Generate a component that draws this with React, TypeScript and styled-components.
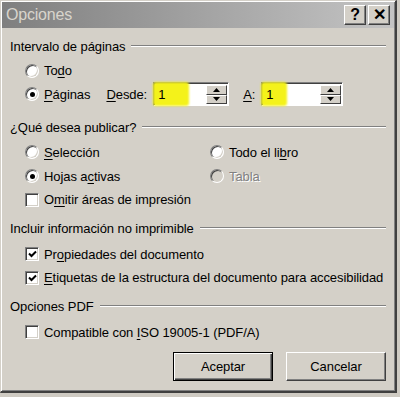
import React from 'react';
import styled, { createGlobalStyle } from 'styled-components';

const GlobalStyle = createGlobalStyle`
  html, body {
    margin: 0;
    padding: 0;
    background: #cfcbc3;
  }
  body {
    font-family: "Liberation Sans", Arial, sans-serif;
    font-size: 13px;
    letter-spacing: -0.08px;
    color: #000;
  }
`;

const Window = styled.div`
  width: 397px;
  height: 393px;
  box-sizing: border-box;
  background: #d4d0c8;
  border-top: 1px solid #d4d0c8;
  border-left: 1px solid #d4d0c8;
  border-right: 2px solid #404040;
  border-bottom: 2px solid #404040;
  box-shadow: inset 1px 1px 0 #ffffff, inset -1px -1px 0 #808080;
  display: flex;
  flex-direction: column;
`;

const TitleBar = styled.div`
  height: 26px;
  margin: 1px 1px 0 1px;
  background: linear-gradient(to right, #7f7f7f 0%, #a9a9a9 60%, #c4c4c4 100%);
  display: flex;
  align-items: center;
  padding: 0 4px 0 4px;
`;

const Title = styled.span`
  flex: 1;
  color: #d8d4cc;
  font-size: 16px;
  letter-spacing: -0.2px;
`;

const TitleButton = styled.div`
  width: 20px;
  height: 18px;
  margin-left: 2px;
  background: #d4d0c8;
  border-top: 1px solid #ffffff;
  border-left: 1px solid #ffffff;
  border-right: 1px solid #404040;
  border-bottom: 1px solid #404040;
  box-shadow: inset -1px -1px 0 #808080;
  display: flex;
  align-items: center;
  justify-content: center;
  font-weight: bold;
  font-size: 16px;
  line-height: 1;
`;

const Body = styled.div`
  flex: 1;
  display: flex;
  flex-direction: column;
  padding: 9px 9px 0 9px;
`;

const Legend = styled.div<{ $top?: number }>`
  display: flex;
  align-items: center;
  height: 18px;
  margin-top: ${({ $top }) => $top ?? 0}px;
  gap: 6px;
  &::after {
    content: '';
    flex: 1;
    height: 0;
    border-top: 1px solid #808080;
    border-bottom: 1px solid #ffffff;
  }
`;

const Rows = styled.div<{ $top?: number }>`
  display: flex;
  flex-direction: column;
  margin-top: ${({ $top }) => $top ?? 0}px;
  padding-left: 15px;
`;

const Row = styled.div<{ $h?: number }>`
  display: flex;
  align-items: center;
  height: ${({ $h }) => $h ?? 24}px;
`;

const Cell = styled.div<{ $w?: number }>`
  display: flex;
  align-items: center;
  width: ${({ $w }) => ($w ? `${$w}px` : 'auto')};
`;

const RadioDot = styled.span<{ $checked?: boolean; $disabled?: boolean }>`
  position: relative;
  width: 12px;
  height: 12px;
  border-radius: 50%;
  background: ${({ $disabled }) => ($disabled ? '#d4d0c8' : '#ffffff')};
  border: 1px solid;
  border-color: #808080 #ffffff #ffffff #808080;
  box-shadow: inset 1px 1px 0 #404040, inset -1px -1px 0 #d4d0c8;
  margin-right: 5px;
  flex-shrink: 0;
  &::after {
    content: '';
    display: ${({ $checked }) => ($checked ? 'block' : 'none')};
    position: absolute;
    left: 3.5px;
    top: 3.5px;
    width: 5px;
    height: 5px;
    border-radius: 50%;
    background: #000;
  }
`;

const Box = styled.span`
  width: 12px;
  height: 12px;
  background: #ffffff;
  border: 1px solid;
  border-color: #808080 #ffffff #ffffff #808080;
  box-shadow: inset 1px 1px 0 #404040, inset -1px -1px 0 #d4d0c8;
  margin-right: 5px;
  flex-shrink: 0;
  display: flex;
  align-items: center;
  justify-content: center;
`;

const Label = styled.span<{ $disabled?: boolean }>`
  color: ${({ $disabled }) => ($disabled ? '#808080' : '#000')};
  text-shadow: ${({ $disabled }) => ($disabled ? '1px 1px 0 #ffffff' : 'none')};
  white-space: nowrap;
`;

const Key = styled.span`
  text-decoration: underline;
  text-underline-offset: 2px;
`;

const FieldLabel = styled.span<{ $left: number }>`
  margin-left: ${({ $left }) => $left}px;
  margin-right: 6px;
`;

const Spin = styled.div<{ $w: number }>`
  width: ${({ $w }) => $w}px;
  height: 24px;
  box-sizing: border-box;
  background: #ffffff;
  border: 1px solid;
  border-color: #808080 #ffffff #ffffff #808080;
  box-shadow: inset 1px 1px 0 #404040;
  display: flex;
  align-items: stretch;
  padding: 2px 1px 1px 2px;
`;

const SpinText = styled.div`
  flex: 1;
  position: relative;
  display: flex;
  align-items: center;
  padding-left: 2px;
`;

const Marker = styled.span<{ $w: number }>`
  position: absolute;
  left: -3px;
  top: -3px;
  bottom: -2px;
  width: ${({ $w }) => $w}px;
  background: #f4f21a;
  border-radius: 3px;
  filter: blur(1px);
`;

const SpinValue = styled.span`
  position: relative;
`;

const Arrows = styled.div`
  width: 21px;
  display: flex;
  flex-direction: column;
`;

const ArrowButton = styled.div`
  flex: 1;
  background: #d4d0c8;
  border-top: 1px solid #ffffff;
  border-left: 1px solid #ffffff;
  border-right: 1px solid #404040;
  border-bottom: 1px solid #404040;
  display: flex;
  align-items: center;
  justify-content: center;
`;

const Buttons = styled.div`
  display: flex;
  justify-content: flex-end;
  gap: 13px;
  margin-top: 8px;
`;

const Button = styled.div<{ $default?: boolean }>`
  width: 100px;
  height: 29px;
  box-sizing: border-box;
  background: #d4d0c8;
  border: 1px solid;
  border-color: ${({ $default }) => ($default ? '#000' : '#ffffff #404040 #404040 #ffffff')};
  box-shadow: ${({ $default }) =>
    $default ? 'inset 1px 1px 0 #ffffff, inset -1px -1px 0 #404040, inset -2px -2px 0 #808080' : 'inset -1px -1px 0 #808080'};
  display: flex;
  align-items: center;
  justify-content: center;
`;

const Check = () => (
  <svg width="9" height="8" viewBox="0 0 9 8">
    <path d="M1 3.5 L3.5 6 L8 1.5" stroke="#000" strokeWidth="2" fill="none" />
  </svg>
);

const Tri = ({ up }: { up?: boolean }) => (
  <svg width="7" height="4" viewBox="0 0 7 4">
    <path d={up ? 'M0 4 L3.5 0 L7 4 Z' : 'M0 0 L3.5 4 L7 0 Z'} fill="#000" />
  </svg>
);

const SpinBox = ({ w, mark }: { w: number; mark: number }) => (
  <Spin $w={w}>
    <SpinText>
      <Marker $w={mark} />
      <SpinValue>1</SpinValue>
    </SpinText>
    <Arrows>
      <ArrowButton><Tri up /></ArrowButton>
      <ArrowButton><Tri /></ArrowButton>
    </Arrows>
  </Spin>
);

export default function App() {
  return (
    <>
      <GlobalStyle />
      <Window>
        <TitleBar>
          <Title>Opciones</Title>
          <TitleButton>?</TitleButton>
          <TitleButton>✕</TitleButton>
        </TitleBar>
        <Body>
          <Legend>Intervalo de páginas</Legend>
          <Rows $top={4}>
            <Row $h={23}>
              <RadioDot />
              <Label>To<Key>d</Key>o</Label>
            </Row>
            <Row $h={24}>
              <RadioDot $checked />
              <Label><Key>P</Key>áginas</Label>
              <FieldLabel $left={16}><Key>D</Key>esde:</FieldLabel>
              <SpinBox w={76} mark={36} />
              <FieldLabel $left={14}><Key>A</Key>:</FieldLabel>
              <SpinBox w={82} mark={26} />
            </Row>
          </Rows>

          <Legend $top={12}>¿Qué desea publicar?</Legend>
          <Rows $top={4}>
            <Row>
              <Cell $w={185}>
                <RadioDot />
                <Label><Key>S</Key>elección</Label>
              </Cell>
              <Cell>
                <RadioDot />
                <Label>Todo el li<Key>b</Key>ro</Label>
              </Cell>
            </Row>
            <Row>
              <Cell $w={185}>
                <RadioDot $checked />
                <Label>Hojas a<Key>c</Key>tivas</Label>
              </Cell>
              <Cell>
                <RadioDot $disabled />
                <Label $disabled>Tabla</Label>
              </Cell>
            </Row>
            <Row $h={23}>
              <Box />
              <Label>O<Key>m</Key>itir áreas de impresión</Label>
            </Row>
          </Rows>

          <Legend $top={8}>Incluir información no imprimible</Legend>
          <Rows $top={5}>
            <Row>
              <Box><Check /></Box>
              <Label>Pr<Key>o</Key>piedades del documento</Label>
            </Row>
            <Row $h={23}>
              <Box><Check /></Box>
              <Label><Key>E</Key>tiquetas de la estructura del documento para accesibilidad</Label>
            </Row>
          </Rows>

          <Legend $top={8}>Opciones PDF</Legend>
          <Rows $top={5}>
            <Row>
              <Box />
              <Label>Compatible con <Key>I</Key>SO 19005-1 (PDF/A)</Label>
            </Row>
          </Rows>

          <Buttons>
            <Button $default>Aceptar</Button>
            <Button>Cancelar</Button>
          </Buttons>
        </Body>
      </Window>
    </>
  );
}
